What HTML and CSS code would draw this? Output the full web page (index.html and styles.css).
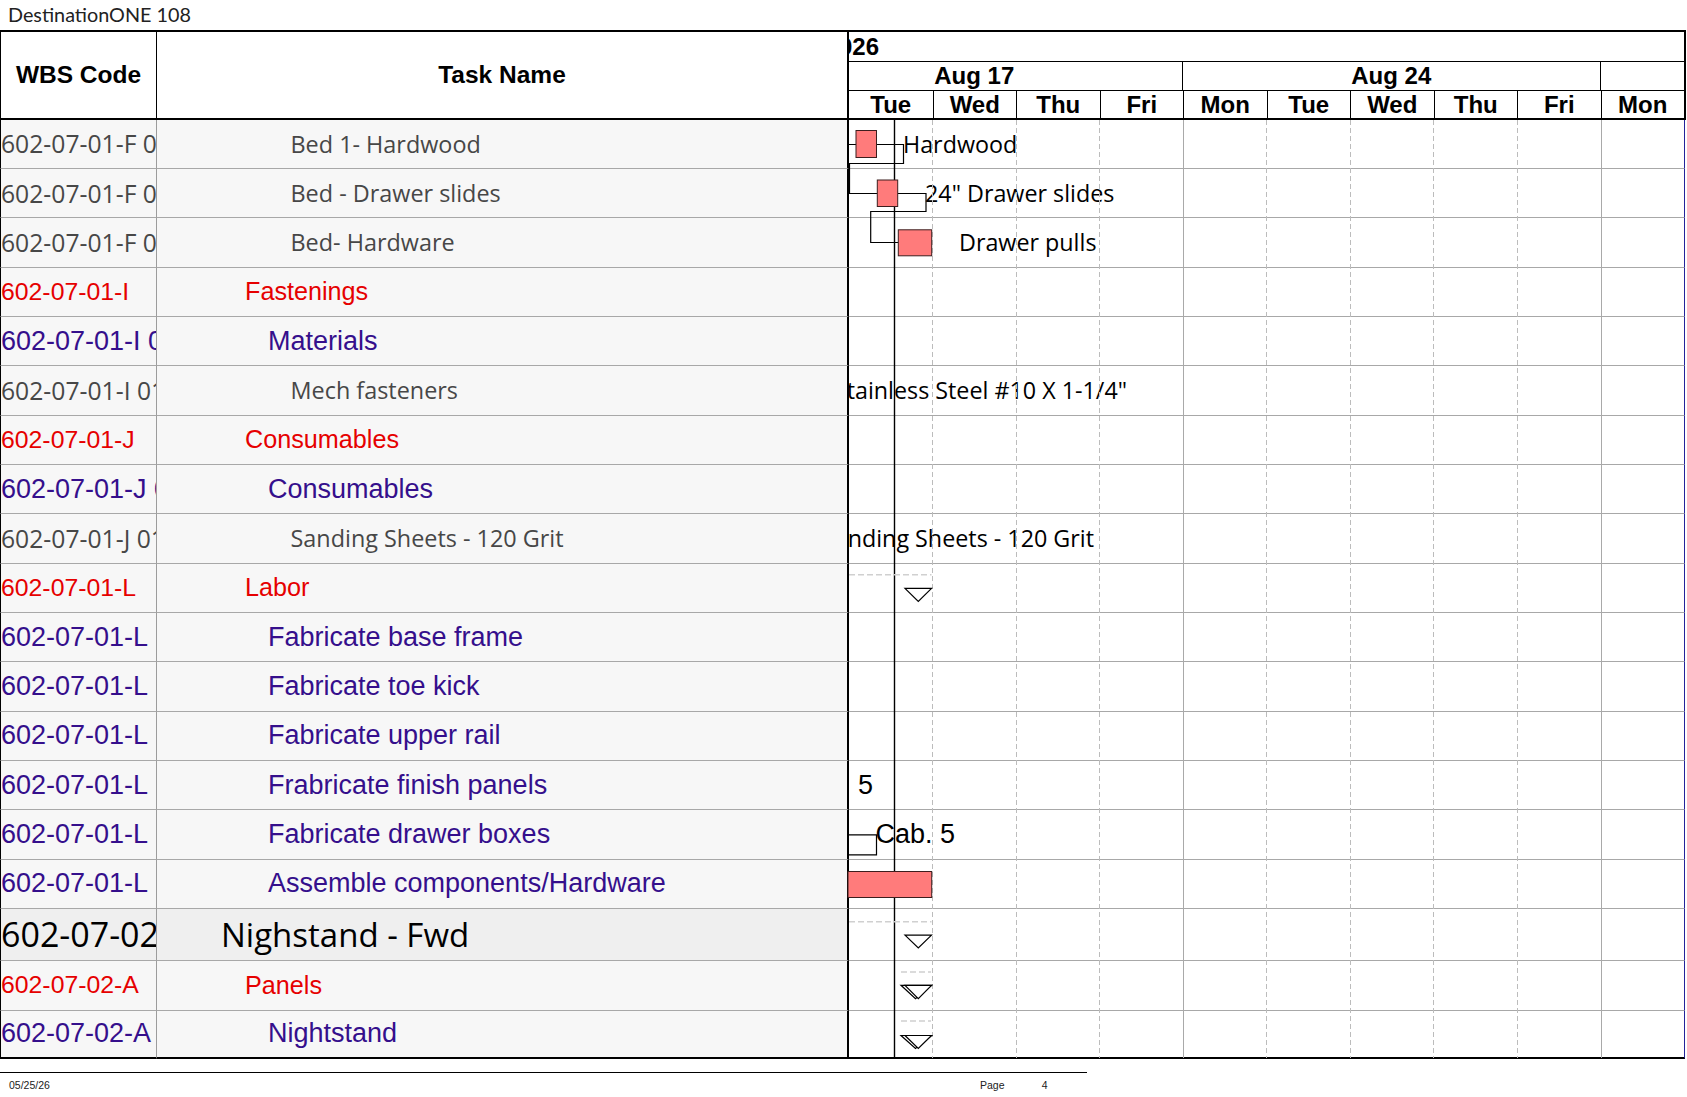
FILE: index.html
```html
<!DOCTYPE html>
<html>
<head>
<meta charset="utf-8">
<title>DestinationONE 108</title>
<link rel="stylesheet" href="styles.css">
</head>
<body>
<div class="title">DestinationONE 108</div>
<div class="sheet">
  <div class="head">
    <div class="h-wbs">WBS Code</div>
    <div class="h-task">Task Name</div>
    <div class="h-gantt">
      <div class="year-row"><span class="year">2026</span></div>
      <div class="week-row">
        <div class="week w1"><span>Aug 17</span></div>
        <div class="week w2">Aug 24</div>
        <div class="week w3"></div>
      </div>
      <div class="day-row">
        <div class="day">Tue</div>
        <div class="day">Wed</div>
        <div class="day">Thu</div>
        <div class="day">Fri</div>
        <div class="day">Mon</div>
        <div class="day">Tue</div>
        <div class="day">Wed</div>
        <div class="day">Thu</div>
        <div class="day">Fri</div>
        <div class="day">Mon</div>
      </div>
    </div>
  </div>
  <div class="body">
    <div class="row l5"><div class="wbs">602-07-01-F 01</div><div class="task">Bed 1- Hardwood</div><div class="gantt"><span class="lbl lbl-hardwood">Hardwood</span></div></div>
    <div class="row l5"><div class="wbs">602-07-01-F 02</div><div class="task">Bed - Drawer slides</div><div class="gantt"><span class="lbl lbl-slides">24" Drawer slides</span></div></div>
    <div class="row l5"><div class="wbs">602-07-01-F 03</div><div class="task">Bed- Hardware</div><div class="gantt"><span class="lbl lbl-pulls">Drawer pulls</span></div></div>
    <div class="row l3"><div class="wbs">602-07-01-I</div><div class="task">Fastenings</div><div class="gantt"></div></div>
    <div class="row l4"><div class="wbs">602-07-01-I 01</div><div class="task">Materials</div><div class="gantt"></div></div>
    <div class="row l5"><div class="wbs">602-07-01-I 01 01</div><div class="task">Mech fasteners</div><div class="gantt"><span class="lbl lbl-steel">Stainless Steel #10 X 1-1/4"</span></div></div>
    <div class="row l3"><div class="wbs">602-07-01-J</div><div class="task">Consumables</div><div class="gantt"></div></div>
    <div class="row l4"><div class="wbs">602-07-01-J 01</div><div class="task">Consumables</div><div class="gantt"></div></div>
    <div class="row l5"><div class="wbs">602-07-01-J 01 01</div><div class="task">Sanding Sheets - 120 Grit</div><div class="gantt"><span class="lbl lbl-sanding">Sanding Sheets - 120 Grit</span></div></div>
    <div class="row l3"><div class="wbs">602-07-01-L</div><div class="task">Labor</div><div class="gantt"></div></div>
    <div class="row l4"><div class="wbs">602-07-01-L</div><div class="task">Fabricate base frame</div><div class="gantt"></div></div>
    <div class="row l4"><div class="wbs">602-07-01-L</div><div class="task">Fabricate toe kick</div><div class="gantt"></div></div>
    <div class="row l4"><div class="wbs">602-07-01-L</div><div class="task">Fabricate upper rail</div><div class="gantt"></div></div>
    <div class="row l4"><div class="wbs">602-07-01-L</div><div class="task">Frabricate finish panels</div><div class="gantt"><span class="lbl arial lbl-cab-end">Cab. 5</span></div></div>
    <div class="row l4"><div class="wbs">602-07-01-L</div><div class="task">Fabricate drawer boxes</div><div class="gantt"><span class="lbl arial lbl-cab">Cab. 5</span></div></div>
    <div class="row l4"><div class="wbs">602-07-01-L</div><div class="task">Assemble components/Hardware</div><div class="gantt"></div></div>
    <div class="row l2 big"><div class="wbs">602-07-02</div><div class="task">Nighstand - Fwd</div><div class="gantt"></div></div>
    <div class="row l3 mid"><div class="wbs">602-07-02-A</div><div class="task">Panels</div><div class="gantt"></div></div>
    <div class="row l4 last"><div class="wbs">602-07-02-A</div><div class="task">Nightstand</div><div class="gantt"></div></div>

    <svg class="overlay" viewBox="0 0 835 940" width="835" height="940">
      <g stroke="#bcbcbc" stroke-width="1" stroke-dasharray="5 3">
        <line x1="83.5" y1="0" x2="83.5" y2="938"/>
        <line x1="167.5" y1="0" x2="167.5" y2="938"/>
        <line x1="250.5" y1="0" x2="250.5" y2="938"/>
        <line x1="417.5" y1="0" x2="417.5" y2="938"/>
        <line x1="501.5" y1="0" x2="501.5" y2="938"/>
        <line x1="584.5" y1="0" x2="584.5" y2="938"/>
        <line x1="668.5" y1="0" x2="668.5" y2="938"/>
      </g>
      <g stroke="#a9a9a9" stroke-width="1">
        <line x1="334.5" y1="0" x2="334.5" y2="938"/>
        <line x1="752.5" y1="0" x2="752.5" y2="938"/>
      </g>
      <line x1="45.5" y1="0" x2="45.5" y2="938" stroke="#000" stroke-width="1.4"/>
      <g stroke="#d0d0d0" stroke-width="1.5" stroke-dasharray="6 3" fill="none">
        <line x1="0" y1="454.7" x2="82.5" y2="454.7"/>
        <line x1="0" y1="801.7" x2="82.5" y2="801.7"/>
        <line x1="52" y1="851.9" x2="82" y2="851.9"/>
        <line x1="52" y1="901.1" x2="82" y2="901.1"/>
      </g>
      <g fill="none" stroke="#000" stroke-width="1.2">
        <path d="M0 24.5 H7 M27.5 24.5 H54.5 V43.5 H0.5 V73.5 H28.3"/>
        <path d="M48.7 73.5 H77 V91.5 H21.7 V122.5 H49.3"/>
        <path d="M0 714.8 H27.5 V734.8 H0"/>
      </g>
      <g fill="#ff7b7b" stroke="#3c1e1e" stroke-width="1">
        <rect x="7" y="10.5" width="20.5" height="27"/>
        <rect x="28.3" y="60" width="20.4" height="26.5"/>
        <rect x="49.3" y="109.8" width="33.4" height="26"/>
        <rect x="-1" y="751.5" width="83.7" height="26"/>
      </g>
      <g fill="#fff" stroke="#000" stroke-width="1.2">
        <polygon points="56,468.4 82.5,468.4 69.3,481.4"/>
        <polygon points="56,815.2 82.5,815.2 69.3,828"/>
        <polygon points="52,865.3 82.5,865.3 66.5,878.6"/>
        <polygon points="56,865.3 82.5,865.3 69.3,878.6"/>
        <polygon points="52,915.5 82.5,915.5 66.5,928.5"/>
        <polygon points="56,915.5 82.5,915.5 69.3,928.5"/>
      </g>
    </svg>
  </div>
</div>
<div class="footer">
  <div class="date">05/25/26</div>
  <div class="page">Page</div>
  <div class="pnum">4</div>
</div>
</body>
</html>
```
FILE: styles.css
```css
html, body {
  margin: 0;
  padding: 0;
  background: #ffffff;
}
body {
  width: 1687px;
  height: 1097px;
  overflow: hidden;
  font-family: "Liberation Sans", Arial, sans-serif;
}

.title {
  height: 29.5px;
  line-height: 29px;
  padding-left: 8px;
  font-family: Lato, "DejaVu Sans", sans-serif;
  font-weight: 400;
  font-size: 19.8px;
  color: #222;
  white-space: nowrap;
}

.sheet {
  width: 1686px;
}

/* ---------- header ---------- */
.head {
  display: flex;
  height: 90px;
  box-sizing: border-box;
  border-top: 2px solid #000;
  border-bottom: 2px solid #000;
}
.h-wbs,
.h-task {
  box-sizing: border-box;
  display: flex;
  align-items: center;
  justify-content: center;
  font-family: "Liberation Sans", Arial, sans-serif;
  font-weight: bold;
  font-size: 24.5px;
  color: #000;
  white-space: nowrap;
}
.h-wbs {
  width: 157px;
  border-left: 1px solid #000;
  border-right: 1px solid #000;
}
.h-task {
  width: 692px;
  border-right: 2px solid #000;
}
.h-gantt {
  width: 837px;
  box-sizing: border-box;
  border-right: 2px solid #000;
  overflow: hidden;
  font-family: "Liberation Sans", Arial, sans-serif;
  font-weight: bold;
  font-size: 24px;
  color: #000;
  white-space: nowrap;
}
.year-row {
  height: 30px;
  box-sizing: border-box;
  border-bottom: 1px solid #000;
  line-height: 29px;
}
.year {
  margin-left: -23.4px;
}
.week-row {
  display: flex;
  height: 29px;
  box-sizing: border-box;
  border-bottom: 1px solid #000;
  line-height: 28px;
}
.week {
  box-sizing: border-box;
  overflow: hidden;
  border-right: 1px solid #000;
  text-align: center;
}
.w1 {
  width: 334px;
}
.w1 span {
  display: block;
  width: 417.5px;
  margin-left: -83.5px;
  text-align: center;
}
.w2 {
  width: 417.5px;
}
.w3 {
  flex: 1;
  border-right: 0;
}
.day-row {
  display: flex;
  height: 27px;
  line-height: 27px;
}
.day {
  width: 83.5px;
  flex: none;
  box-sizing: border-box;
  border-left: 1px solid #000;
  text-align: center;
}
.day:first-child {
  border-left: 0;
}

/* ---------- body rows ---------- */
.body {
  position: relative;
}
.row {
  display: flex;
  height: 49.35px;
}
.row > div {
  box-sizing: border-box;
  border-bottom: 1px solid #a8a8a8;
  overflow: hidden;
  white-space: nowrap;
}
.wbs,
.task {
  display: flex;
  align-items: center;
  background: #f7f7f7;
}
.wbs {
  width: 157px;
  border-left: 1px solid #000;
  border-right: 1px solid #9c9c9c;
}
.task {
  width: 692px;
  border-right: 2px solid #000;
}
.gantt {
  width: 836px;
  position: relative;
  background: #ffffff;
  border-right: 1px solid #23239a;
}
.row.big {
  height: 51.5px;
}
.row.big .wbs,
.row.big .task {
  background: #efefef;
}
.row.mid {
  height: 50px;
}
.row.last {
  height: 48.6px;
}
.row.last > div {
  border-bottom: 2px solid #000;
}

/* outline levels */
.l2 .wbs {
  font-family: "Open Sans", sans-serif;
  font-size: 34px;
  color: #000;
}
.l2 .task {
  font-family: "Open Sans", sans-serif;
  font-size: 33px;
  color: #000;
  padding-left: 64px;
}
.l3 .wbs {
  font-family: "Liberation Sans", Arial, sans-serif;
  font-size: 24.8px;
  color: #e60000;
}
.l3 .task {
  font-family: "Liberation Sans", Arial, sans-serif;
  font-size: 25.2px;
  color: #e60000;
  padding-left: 88px;
}
.l4 .wbs {
  font-family: "Liberation Sans", Arial, sans-serif;
  font-size: 27px;
  color: #350f8c;
}
.l4 .task {
  font-family: "Liberation Sans", Arial, sans-serif;
  font-size: 27px;
  color: #350f8c;
  padding-left: 111px;
}
.l5 .wbs {
  font-family: "Open Sans", sans-serif;
  font-size: 24.7px;
  color: #474747;
}
.l5 .task {
  font-family: "Open Sans", sans-serif;
  font-size: 23.4px;
  color: #474747;
  padding-left: 133.5px;
}

/* gantt labels */
.lbl {
  position: absolute;
  top: 0;
  bottom: 0;
  display: flex;
  align-items: center;
  font-family: "Open Sans", sans-serif;
  font-size: 23.3px;
  color: #000;
  white-space: nowrap;
}
.lbl.arial {
  font-family: "Liberation Sans", Arial, sans-serif;
  font-size: 27px;
}
.lbl-hardwood { left: 54px; }
.lbl-slides { left: 76px; }
.lbl-pulls { left: 110px; }
.lbl-cab { left: 26.5px; }
.lbl-steel { right: 557px; }
.lbl-sanding { right: 590px; }
.lbl-cab-end { right: 811px; }

.overlay {
  position: absolute;
  left: 849px;
  top: 0;
  overflow: visible;
  pointer-events: none;
}

/* ---------- footer ---------- */
.footer {
  margin-top: 13px;
  width: 1087px;
  border-top: 1px solid #000;
  display: grid;
  grid-template-columns: 980px 61.7px auto;
  font-family: "Liberation Sans", Arial, sans-serif;
  font-size: 10.5px;
  line-height: 24px;
  color: #222;
}
.date {
  padding-left: 9px;
}
```
